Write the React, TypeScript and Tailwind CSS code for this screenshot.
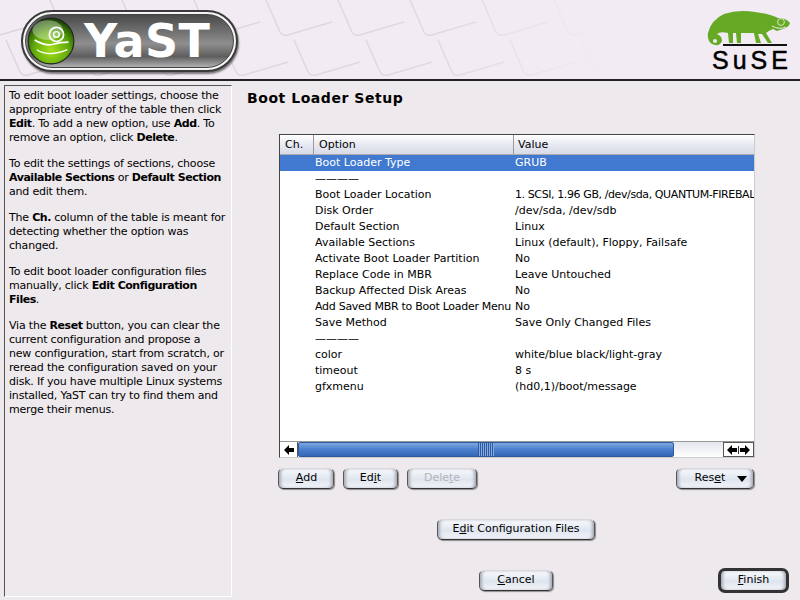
const rows: [string, string][] = [
  ['Boot Loader Type', 'GRUB'],
  ['————', ''],
  ['Boot Loader Location', '1. SCSI, 1.96 GB, /dev/sda, QUANTUM-FIREBALL'],
  ['Disk Order', '/dev/sda, /dev/sdb'],
  ['Default Section', 'Linux'],
  ['Available Sections', 'Linux (default), Floppy, Failsafe'],
  ['Activate Boot Loader Partition', 'No'],
  ['Replace Code in MBR', 'Leave Untouched'],
  ['Backup Affected Disk Areas', 'No'],
  ['Add Saved MBR to Boot Loader Menu', 'No'],
  ['Save Method', 'Save Only Changed Files'],
  ['————', ''],
  ['color', 'white/blue black/light-gray'],
  ['timeout', '8 s'],
  ['gfxmenu', '(hd0,1)/boot/message'],
];

// faint tilted keyboard keys behind the header
const keys: [number, number][] = [];
for (let r = 0; r < 4; r++) {
  for (let c = 0; c < 10; c++) {
    keys.push([c * 72 - 50 + r * 28, r * 40 - 40]);
  }
}

function KeyboardBg() {
  return (
    <svg className="absolute inset-0 blur-[0.7px]" width="800" height="79" viewBox="0 0 800 79">
      <defs>
        <linearGradient id="fade" gradientUnits="userSpaceOnUse" x1="0" x2="800" y1="0" y2="0">
          <stop offset="0" stopColor="#dcd5da" />
          <stop offset="0.55" stopColor="#e0d9de" />
          <stop offset="0.76" stopColor="#f2ebf3" />
        </linearGradient>
      </defs>
      <g fill="none" stroke="url(#fade)" strokeWidth="1.5">
        {keys.map(([x, y], i) => (
          <path key={i} d={`M${x} ${y} L${x + 14} ${y + 32} Q${x + 16} ${y + 36} ${x + 22} ${y + 35} L${x + 66} ${y + 22}`} />
        ))}
      </g>
    </svg>
  );
}

function YastLogo() {
  return (
    <div className="absolute left-[21px] top-[10px] h-[62px] w-[217px] rounded-[31px] border-[2px] border-[#3a3a3a] bg-[#f4f4f4] p-[2px] shadow-[1px_2px_2px_rgba(0,0,0,0.5)]">
      <div className="flex h-full items-center rounded-[27px] border border-[#444] bg-[linear-gradient(#4a4a4a,#6e6e6e_30%,#8e8e8e_55%,#5e5e5e_80%,#b0b0b0)] pl-[1px]">
        <svg width="48" height="48" viewBox="0 0 44 44" className="shrink-0">
          <defs>
            <radialGradient id="ball" cx="0.5" cy="0.7" r="0.65">
              <stop offset="0" stopColor="#a6e01a" />
              <stop offset="0.6" stopColor="#5fa80c" />
              <stop offset="1" stopColor="#1d4a04" />
            </radialGradient>
          </defs>
          <circle cx="22" cy="22" r="21" fill="url(#ball)" stroke="#222" strokeWidth="1" />
          <ellipse cx="19" cy="12" rx="14" ry="9" fill="#fff" opacity="0.35" />
          <circle cx="27" cy="16" r="6.5" fill="none" stroke="#fff" strokeWidth="1.6" />
          <circle cx="27" cy="16" r="2.6" fill="none" stroke="#fff" strokeWidth="1.3" />
          <path d="M7 21 Q17 27 24 25 T38 23" fill="none" stroke="#fff" strokeWidth="1.6" />
          <path d="M9 30 Q20 37 37 30" fill="none" stroke="#fff" strokeWidth="1.2" />
        </svg>
        <span className="ml-[9px] font-['DejaVu_Sans'] text-[46px] leading-none font-bold tracking-[0.4px] text-white">YaST</span>
      </div>
    </div>
  );
}

function SuseLogo() {
  return (
    <div className="absolute right-[10px] top-[9px] flex h-[60px] w-[84px] flex-col items-end">
      <svg width="84" height="37" viewBox="706 9 84 37" className="shrink-0">
        <path
          d="M712 44 Q707 41 708 33 Q711 20 724 14 Q738 9 755 12 Q770 14 778 18 Q786 18 790 23 Q789 27 783 29 L777 31 L773 29 Q768 31 766 33 L772 43 L768 43 L762 34 L758 34 L761 43 L756 43 L754 33 Q745 33 741 33 L741 43 L737 43 L736 33 L733 33 L733 43 L729 43 L728 33 Q720 31 717 34 Q722 36 722 41 Q720 46 715 45 Z"
          fill="#66a924"
        />
        <circle cx="715" cy="41" r="2" fill="#f2ebf3" />
        <circle cx="781" cy="22" r="3.4" fill="none" stroke="#d8e8c0" strokeWidth="1" />
        <path d="M772 26 Q779 30 786 27" fill="none" stroke="#f2ebf3" strokeWidth="1" />
        <rect x="723" y="44" width="64" height="2" fill="#111" />
      </svg>
      <div className="mt-[2px] w-full pl-[6px] font-['Liberation_Sans'] text-[25px] leading-[24px] tracking-[4px] text-black [-webkit-text-stroke:0.5px_#000]">SuSE</div>
    </div>
  );
}

function Btn({ children, w, disabled, dflt }: { children: React.ReactNode; w: string; disabled?: boolean; dflt?: boolean }) {
  return (
    <button
      className={`flex h-[21px] items-center justify-center rounded-[5px] border border-[#d8d8de] border-b-[#333] border-r-[#555] border-l-[#555] bg-[linear-gradient(#f8f9fc,#dfe5ef_55%,#f2f3f8)] shadow-[1px_1px_1px_rgba(0,0,0,0.4),inset_3px_0_3px_-1px_#a8acb8,inset_-3px_0_3px_-1px_#a8acb8] ${w} ${disabled ? 'text-[#b4b4ba]' : 'text-black'}`}
      style={dflt ? { outline: '3px solid #333', outlineOffset: '-1px' } : undefined}
    >
      {children}
    </button>
  );
}

function Arrow({ dir }: { dir: 'l' | 'r' }) {
  return (
    <svg width="10" height="10" viewBox="0 0 10 10">
      <path d={dir === 'l' ? 'M0 5 L5 0 V3 H10 V7 H5 V10 Z' : 'M10 5 L5 0 V3 H0 V7 H5 V10 Z'} fill="#000" />
    </svg>
  );
}

export default function App() {
  return (
    <div className="h-[600px] w-[800px] overflow-hidden bg-[#eee9ec] font-['DejaVu_Sans',sans-serif] text-[11px] text-black">
      <header className="relative h-[81px] border-b-[2px] border-[#222] bg-[#f2ebf3]">
        <KeyboardBg />
        <YastLogo />
        <SuseLogo />
      </header>

      <div className="flex">
        {/* Help text */}
        <aside className="mt-[4px] ml-[4px] h-[512px] w-[228px] border border-t-[#555] border-l-[#555] border-r-white border-b-white px-[4px] pt-[3px] text-[11px] leading-[14px] tracking-[-0.2px] whitespace-nowrap [&_b]:tracking-[-0.45px]">
          <p>
            To edit boot loader settings, choose the<br />
            appropriate entry of the table then click<br />
            <b>Edit</b>. To add a new option, use <b>Add</b>. To<br />
            remove an option, click <b>Delete</b>.
          </p>
          <p className="mt-[12px]">
            To edit the settings of sections, choose<br />
            <b>Available Sections</b> or <b>Default Section</b><br />
            and edit them.
          </p>
          <p className="mt-[12px]">
            The <b>Ch.</b> column of the table is meant for<br />
            detecting whether the option was<br />
            changed.
          </p>
          <p className="mt-[12px]">
            To edit boot loader configuration files<br />
            manually, click <b>Edit Configuration</b><br />
            <b>Files</b>.
          </p>
          <p className="mt-[12px]">
            Via the <b>Reset</b> button, you can clear the<br />
            current configuration and propose a<br />
            new configuration, start from scratch, or<br />
            reread the configuration saved on your<br />
            disk. If you have multiple Linux systems<br />
            installed, YaST can try to find them and<br />
            merge their menus.
          </p>
        </aside>

        {/* Main content */}
        <main className="flex-1 pl-[15px]">
          <h1 className="mt-[9px] h-[17px] text-[14px] leading-[17px] font-bold tracking-[0.55px]">Boot Loader Setup</h1>

          <div className="mt-[27px] ml-[32px] flex h-[324px] w-[476px] flex-col overflow-hidden border border-t-[#444] border-l-[#444] border-r-[#ccc] border-b-[#ccc] bg-white">
            <div className="flex h-[20px] shrink-0 border-b border-[#aaa] bg-[linear-gradient(#fff,#e4e6f0_60%,#d8dae6)] leading-[19px]">
              <div className="w-[34px] border-r border-[#999] pl-[5px]">Ch.</div>
              <div className="w-[200px] border-r border-[#999] pl-[5px]">Option</div>
              <div className="flex-1 pl-[4px]">Value</div>
            </div>
            <div className="flex-1">
              {rows.map(([opt, val], i) => (
                <div key={i} className={`flex h-[16px] leading-[16px] whitespace-nowrap ${i === 0 ? 'bg-[#4079cf] text-white' : ''}`}>
                  <div className="w-[35px] shrink-0" />
                  <div className={`w-[200px] shrink-0 overflow-hidden ${i === 9 ? 'tracking-[-0.28px]' : ''}`}>{opt}</div>
                  <div className={`overflow-hidden ${i === 2 ? 'tracking-[-0.4px]' : ''}`}>{i === 2 ? '1. SCSI, 1.96 GB, /dev/sda, QUANTUM-FIREBAL' : val}</div>
                </div>
              ))}
            </div>
            {/* Horizontal scrollbar */}
            <div className="flex h-[16px] shrink-0 border-t border-[#999] bg-[linear-gradient(#e4e6ee,#fff)]">
              <div className="flex w-[18px] shrink-0 items-center justify-center border-r border-[#555] bg-white">
                <Arrow dir="l" />
              </div>
              <div className="flex w-[376px] shrink-0 items-center justify-center rounded-[2px] border border-[#2c5a9c] bg-[linear-gradient(#7ea6e0,#4a7fce_50%,#3568b4)]">
                <div className="h-full w-[16px] bg-[repeating-linear-gradient(90deg,#2c5a9c_0_1px,#86abe4_1px_2px)]" />
              </div>
              <div className="flex-1" />
              <div className="flex w-[31px] shrink-0 items-center justify-center gap-[1px] border border-[#555] bg-white">
                <Arrow dir="l" />
                <div className="h-[8px] w-px bg-[#333]" />
                <Arrow dir="r" />
              </div>
            </div>
          </div>

          <div className="mt-[10px] ml-[31px] flex w-[476px]">
            <Btn w="w-[56px]"><span className="ml-[1px]"><u>A</u>dd</span></Btn>
            <div className="ml-[9px]"><Btn w="w-[55px]"><span>Ed<u>i</u>t</span></Btn></div>
            <div className="ml-[9px]"><Btn w="w-[70px]" disabled><span>Dele<u>t</u>e</span></Btn></div>
            <div className="ml-auto">
              <Btn w="w-[78px]">
                <span className="ml-[12px]">Res<u>e</u>t</span>
                <svg width="10" height="6" viewBox="0 0 10 6" className="ml-[12px]"><path d="M0 0 H10 L5 6 Z" fill="#000" /></svg>
              </Btn>
            </div>
          </div>

          <div className="mt-[30px] ml-[190px]">
            <Btn w="w-[158px]"><span>E<u>d</u>it Configuration Files</span></Btn>
          </div>

          <div className="mt-[30px] flex">
            <div className="ml-[232px]"><Btn w="w-[74px]"><span><u>C</u>ancel</span></Btn></div>
            <div className="ml-[167px]"><Btn w="w-[67px]" dflt><span><u>F</u>inish</span></Btn></div>
          </div>
        </main>
      </div>
    </div>
  );
}
